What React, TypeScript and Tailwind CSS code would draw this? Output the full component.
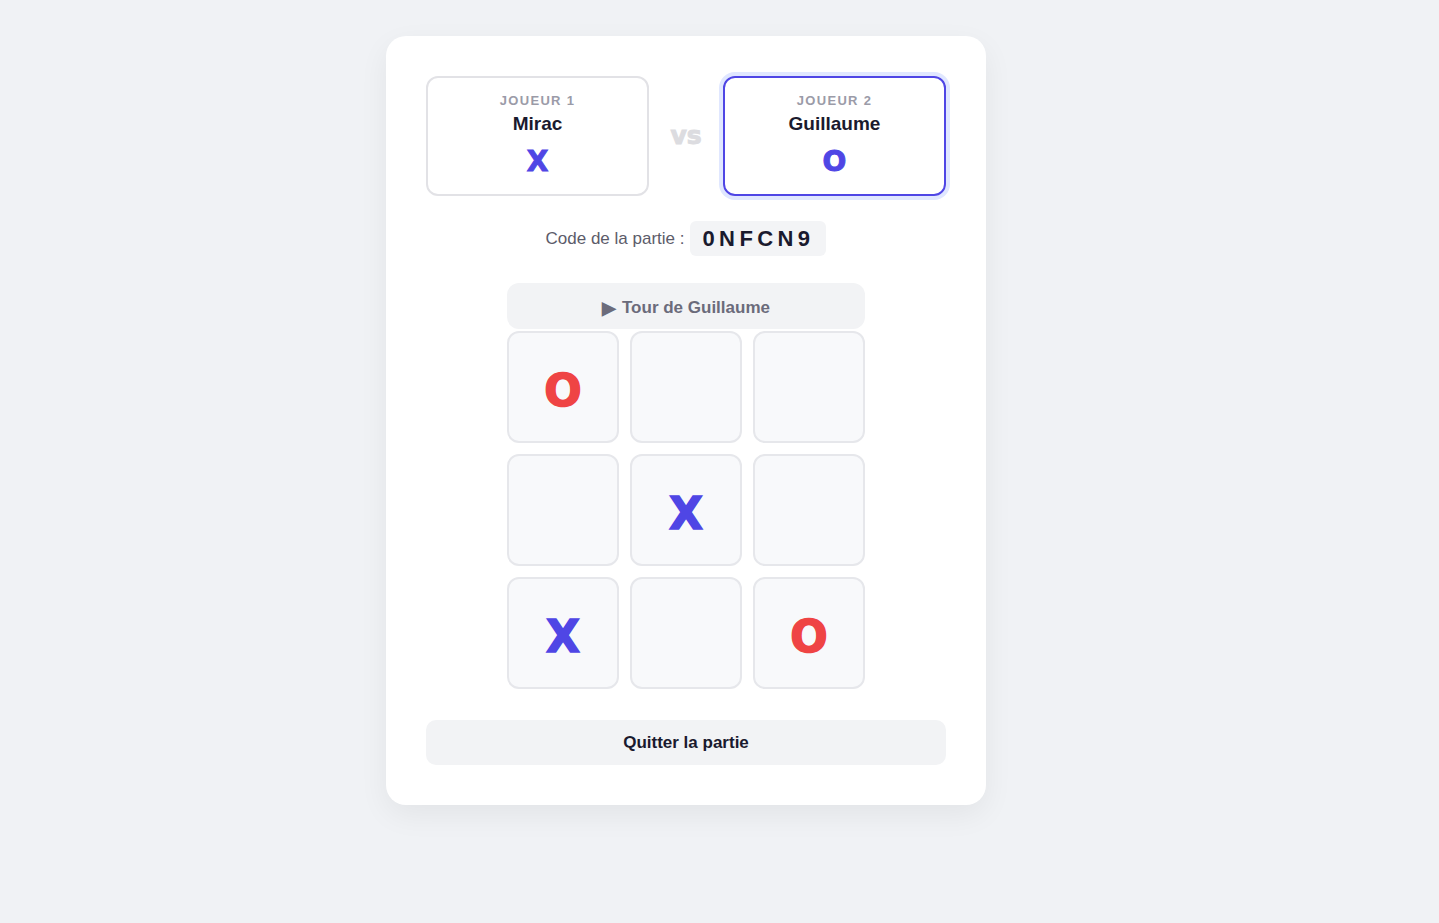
import React from "react";

type Cell = "X" | "O" | null;

const board: Cell[] = ["O", null, null, null, "X", null, "X", null, "O"];

const symbolFont = { fontFamily: '"DejaVu Sans", "Liberation Sans", sans-serif' };

const PlayerCard = ({
  label,
  name,
  symbol,
  active,
}: {
  label: string;
  name: string;
  symbol: string;
  active?: boolean;
}) => (
  <div
    className={`w-[223px] h-[120px] rounded-[12px] border-2 flex flex-col items-center pt-[14px] ${
      active
        ? "border-[#4f46e5] shadow-[0_0_0_4px_#e0e7ff]"
        : "border-[#e2e2e6]"
    }`}
  >
    <span className="text-[13px] font-bold tracking-[0.1em] text-[#9b9ba8] leading-[18px]">
      {label}
    </span>
    <span className="text-[19px] font-bold text-[#1a1a2e] leading-[24px] mt-[2px]">
      {name}
    </span>
    <span
      className="text-[28px] font-bold text-[#4f46e5] leading-[36px] mt-[8px] [-webkit-text-stroke:1px_#4f46e5]"
      style={symbolFont}
    >
      {symbol}
    </span>
  </div>
);

export default function App() {
  return (
    <div
      className="min-h-screen bg-[#f0f2f5] flex justify-center pt-[36px] pr-[67px]"
      style={{ fontFamily: '"Liberation Sans", Arial, sans-serif' }}
    >
      <div className="w-[600px] h-[769px] bg-white rounded-[20px] shadow-[0_10px_30px_rgba(0,0,0,0.06)] p-[40px] flex flex-col items-center">
        {/* Players */}
        <div className="w-full flex items-center justify-between">
          <PlayerCard label="JOUEUR 1" name="Mirac" symbol="X" />
          <span
            className="text-[25px] font-bold text-[#dcdce0] [-webkit-text-stroke:1px_#dcdce0]"
            style={symbolFont}
          >
            vs
          </span>
          <PlayerCard label="JOUEUR 2" name="Guillaume" symbol="O" active />
        </div>

        {/* Game code */}
        <div className="mt-[25px] flex items-center gap-[6px]">
          <span className="text-[17px] text-[#5c5c6a]">Code de la partie :</span>
          <span className="h-[35px] px-[12px] rounded-[6px] bg-[#f3f4f6] flex items-center text-[22px] font-bold tracking-[0.2em] text-[#1a1a2e]">
            0NFCN9
          </span>
        </div>

        {/* Turn */}
        <div className="mt-[27px] w-[358px] h-[47px] pt-[4px] rounded-[12px] bg-[#f2f3f5] flex items-center justify-center gap-[6px] text-[17px] font-bold text-[#6b6b7b]">
          <span className="text-[18px] leading-none">▶</span>
          <span>Tour de Guillaume</span>
        </div>

        {/* Board */}
        <div className="mt-[2px] w-[358px] grid grid-cols-3 gap-[11px]">
          {board.map((c, i) => (
            <div
              key={i}
              className="h-[112px] pt-[7px] rounded-[12px] border-2 border-[#e6e7eb] bg-[#f8f9fb] flex items-center justify-center"
            >
              {c && (
                <span
                  className={`text-[44px] font-bold leading-none ${
                    c === "X"
                      ? "text-[#4f46e5] [-webkit-text-stroke:1.5px_#4f46e5]"
                      : "text-[#ef4444] [-webkit-text-stroke:1.5px_#ef4444]"
                  }`}
                  style={symbolFont}
                >
                  {c}
                </span>
              )}
            </div>
          ))}
        </div>

        {/* Quit */}
        <button className="mt-[31px] w-full h-[46px] rounded-[10px] bg-[#f2f3f5] text-[17px] font-bold text-[#1a1a2e]">
          Quitter la partie
        </button>
      </div>
    </div>
  );
}
